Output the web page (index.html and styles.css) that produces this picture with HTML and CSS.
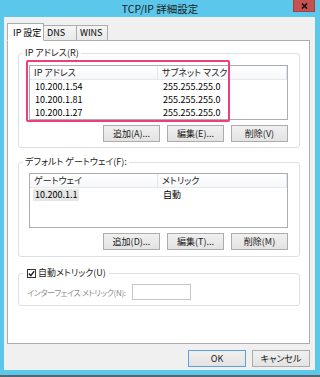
FILE: index.html
```html
<!DOCTYPE html>
<html lang="ja">

<head>
  <meta charset="UTF-8">
  <meta name="viewport" content="width=device-width, initial-scale=1.0">
  <title>TCP/IP 詳細設定</title>
  <link rel="stylesheet" href="styles.css">
</head>

<body>
  <div class="window">

    <div class="titlebar">
      <span></span>
      <span class="title">TCP/IP 詳細設定</span>
      <span class="close">
        <svg width="7" height="6" viewBox="0 0 7 6">
          <path d="M1 0.5 L6 5.5 M6 0.5 L1 5.5" stroke="#111" stroke-width="1.6" fill="none" />
        </svg>
      </span>
    </div>

    <div class="client">
      <div class="tabs">
        <div class="tab tab-active">IP 設定</div>
        <div class="tab tab-dns">DNS</div>
        <div class="tab tab-wins">WINS</div>
      </div>

      <div class="panel">

        <!-- IP addresses -->
        <fieldset class="group">
          <legend>IP アドレス(R)</legend>
          <div class="group-body">
            <div class="lv-wrap">
              <div class="listview">
                <div class="lv-row lv-head"><span>IP アドレス</span><span>サブネット マスク</span><span></span></div>
                <div class="lv-row"><span>10.200.1.54</span><span>255.255.255.0</span><span></span></div>
                <div class="lv-row"><span>10.200.1.81</span><span>255.255.255.0</span><span></span></div>
                <div class="lv-row"><span>10.200.1.27</span><span>255.255.255.0</span><span></span></div>
              </div>
              <div class="highlight"></div>
            </div>
            <div class="btn-row">
              <button class="btn">追加(A)...</button>
              <button class="btn">編集(E)...</button>
              <button class="btn">削除(V)</button>
            </div>
          </div>
        </fieldset>

        <!-- default gateway -->
        <fieldset class="group group-gw">
          <legend>デフォルト ゲートウェイ(F):</legend>
          <div class="group-body group-body-gw">
            <div class="listview">
              <div class="lv-row lv-head"><span>ゲートウェイ</span><span>メトリック</span><span></span></div>
              <div class="lv-row lv-gw"><span><i class="sel">10.200.1.1</i></span><span>自動</span><span></span></div>
            </div>
            <div class="btn-row">
              <button class="btn">追加(D)...</button>
              <button class="btn">編集(T)...</button>
              <button class="btn">削除(M)</button>
            </div>
          </div>
        </fieldset>

        <!-- metric -->
        <fieldset class="group group-metric">
          <legend class="legend-check">
            <span class="check">
              <svg width="7" height="7" viewBox="0 0 7 7">
                <path d="M0.8 3.6 L2.8 5.6 L6.2 1.2" stroke="#222" stroke-width="1.4" fill="none" />
              </svg>
            </span>
            自動メトリック(U)
          </legend>
          <div class="group-body group-body-metric">
            <label class="disabled">インターフェイス メトリック(N):</label>
            <span class="textbox"></span>
          </div>
        </fieldset>

      </div>

      <div class="dialog-buttons">
        <button class="btn btn-wide btn-default">OK</button>
        <button class="btn btn-wide">キャンセル</button>
      </div>
    </div>

  </div>
</body>

</html>
```

FILE: styles.css
```css
* {
  margin: 0;
  padding: 0;
  box-sizing: border-box;
}

body {
  background-color: #5bc7ea;
  color: #000;
  font-family: "Noto Sans CJK JP", "Noto Sans", sans-serif;
  font-size: 9px;
  font-feature-settings: "palt";
}

.window {
  width: 320px;
  height: 377px;
  background: #5bc7ea;
  border-bottom: 2px solid #56666e;
  display: flex;
  flex-direction: column;
}

/* title bar */
.titlebar {
  height: 17px;
  display: grid;
  grid-template-columns: 1fr auto 1fr;
}

.title {
  font-size: 10.5px;
  line-height: 17px;
  color: #1b1b1b;
}

.close {
  justify-self: end;
  align-self: start;
  width: 22px;
  height: 12px;
  margin-right: 5px;
  background: #c75050;
  border: 1px solid #a33e3e;
  border-top: none;
  display: flex;
  align-items: center;
  justify-content: center;
}

/* window body */
.client {
  margin: 0 5px 0 4px;
  height: 353px;
  background: #f0f0f0;
  padding: 6px 5px 0 3px;
}

.tabs {
  display: flex;
  align-items: flex-end;
  height: 18px;
  margin-bottom: -1px;
  position: relative;
}

.tab {
  height: 16px;
  line-height: 14px;
  padding-left: 3px;
  border: 1px solid #acacac;
  border-left: none;
  background: linear-gradient(#f5f5f5, #e9e9e9);
}

.tab-active {
  width: 37px;
  height: 18px;
  line-height: 17px;
  padding-left: 5px;
  border-left: 1px solid #acacac;
  border-bottom-color: #fff;
  background: #fff;
}

.tab-dns {
  width: 33px;
}

.tab-wins {
  width: 31px;
}

.panel {
  height: 304px;
  border: 1px solid #acacac;
  background: #fff;
  padding: 6px 9px 0 10px;
}

/* group boxes */
.group {
  border: 1px solid #dcdfe3;
  border-radius: 3px;
  min-width: 0;
  padding: 0;
}

.group legend {
  margin-left: 4px;
  padding: 0 2px;
  line-height: 12px;
  color: #222;
}

.group-gw {
  margin-top: 8px;
}

.group-metric {
  margin-top: 10px;
}

.group-body {
  padding: 6px 11px 5px 10px;
}

.group-body-gw {
  padding-top: 5px;
  padding-bottom: 6px;
}

.group-body-metric {
  padding: 5px 10px 5px 8px;
  display: grid;
  grid-template-columns: 105px 59px;
  align-items: center;
}

.legend-check {
  display: flex;
  align-items: center;
  gap: 2px;
  padding: 0 3px 0 4px !important;
}

.check {
  width: 9px;
  height: 9px;
  border: 1px solid #333;
  background: #fff;
  display: flex;
  align-items: center;
  justify-content: center;
}

.disabled {
  color: #8d8d8d;
  white-space: nowrap;
  font-size: 8px;
  letter-spacing: -0.3px;
}

.textbox {
  height: 16px;
  border: 1px solid #c5c5c5;
  background: #fff;
}

/* list views */
.lv-wrap {
  position: relative;
}

.listview {
  height: 55px;
  border: 1px solid #abadb3;
  background: #fff;
}

.lv-row {
  display: grid;
  grid-template-columns: 128px 129px 1fr;
  height: 13px;
  line-height: 13px;
  white-space: nowrap;
}

.lv-row span {
  padding-left: 5px;
}

.lv-head {
  background: linear-gradient(#fff, #f6f7f9);
  border-bottom: 1px solid #e6e8ec;
  height: 14px;
  color: #222;
}

.lv-head span {
  padding-left: 4px;
  border-right: 1px solid #e4e6ea;
}

.lv-head span:last-child {
  border-right: none;
}

.lv-gw span:first-child {
  padding-left: 3px;
}

.sel {
  font-style: normal;
  display: inline-block;
  background: #e6e6e6;
  padding: 0 2px;
  line-height: 12px;
}

.highlight {
  position: absolute;
  left: -3px;
  top: -5px;
  width: 204px;
  height: 62px;
  border: 2px solid #ef3e7c;
  border-radius: 2px;
  pointer-events: none;
}

/* buttons */
.btn-row {
  display: flex;
  justify-content: flex-end;
  gap: 7px;
  margin-top: 5px;
}

.btn {
  width: 57px;
  height: 17px;
  border: 1px solid #acacac;
  background: linear-gradient(#f0f0f0, #e3e3e3);
  font-family: inherit;
  font-size: 9px;
  font-feature-settings: "palt";
  color: #1a1a1a;
}

.btn-wide {
  width: 58px;
}

.btn-default {
  border-color: #5ea0dc;
}

.dialog-buttons {
  display: flex;
  justify-content: flex-end;
  gap: 6px;
  margin-top: 6px;
}
```
